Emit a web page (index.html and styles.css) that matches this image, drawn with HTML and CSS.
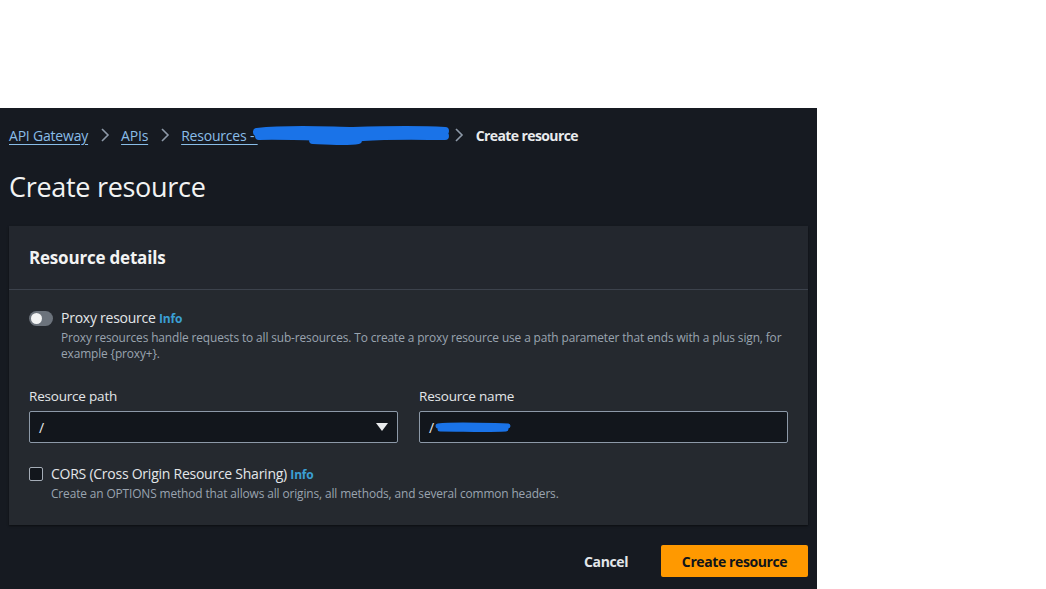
FILE: index.html
```html
<!DOCTYPE html>
<html lang="en">
<head>
<meta charset="utf-8">
<title>Create resource</title>
<link rel="stylesheet" href="styles.css">
</head>
<body>
<div class="top-space"></div>
<div class="app">
  <nav class="crumbs">
    <a class="crumb" href="#">API Gateway</a>
    <svg class="sep" width="16" height="16" viewBox="0 0 16 16"><path d="M5 2l6 6-6 6" fill="none" stroke="#8d99a8" stroke-width="1.6"/></svg>
    <a class="crumb" href="#">APIs</a>
    <svg class="sep" width="16" height="16" viewBox="0 0 16 16"><path d="M5 2l6 6-6 6" fill="none" stroke="#8d99a8" stroke-width="1.6"/></svg>
    <span class="crumb-wrap"><a class="crumb" href="#">Resources - <span class="redact-space"></span></a>
      <svg class="scribble" width="200" height="22" viewBox="0 0 200 22"><path d="M4 9 C40 5 80 8 100 8 C130 7 160 6 192 8 M6 13 C50 12 90 16 110 14 C140 12 170 13 192 13 M60 17 C80 18 95 19 105 17" fill="none" stroke="#1a73e8" stroke-width="8" stroke-linecap="round"/></svg>
    </span>
    <svg class="sep" width="16" height="16" viewBox="0 0 16 16"><path d="M5 2l6 6-6 6" fill="none" stroke="#8d99a8" stroke-width="1.6"/></svg>
    <span class="crumb-current">Create resource</span>
  </nav>
  <h1 class="title">Create resource</h1>
  <section class="card">
    <header class="card-head"><h2>Resource details</h2></header>
    <div class="card-body">
      <div class="opt">
        <span class="toggle"><span class="knob"></span></span>
        <div class="opt-text">
          <div class="opt-label">Proxy resource <a class="info" href="#">Info</a></div>
          <div class="desc">Proxy resources handle requests to all sub-resources. To create a proxy resource use a path parameter that ends with a plus sign, for example {proxy+}.</div>
        </div>
      </div>
      <div class="fields">
        <div class="field">
          <label class="flabel">Resource path</label>
          <div class="input select"><span>/</span>
            <svg width="12" height="10" viewBox="0 0 12 10"><path d="M0 1h12L6 9z" fill="#e9ebed"/></svg>
          </div>
        </div>
        <div class="field">
          <label class="flabel">Resource name</label>
          <div class="input"><span>/</span>
            <svg class="scribble2" width="80" height="12" viewBox="0 0 80 12"><path d="M4 5 C20 3 40 4 74 5 M6 8 C30 8 50 9 72 8" fill="none" stroke="#1a73e8" stroke-width="5" stroke-linecap="round"/></svg>
          </div>
        </div>
      </div>
      <div class="opt cors">
        <span class="checkbox"></span>
        <div class="opt-text">
          <div class="opt-label">CORS (Cross Origin Resource Sharing) <a class="info" href="#">Info</a></div>
          <div class="desc">Create an OPTIONS method that allows all origins, all methods, and several common headers.</div>
        </div>
      </div>
    </div>
  </section>
  <div class="actions">
    <button class="btn-link">Cancel</button>
    <button class="btn-primary">Create resource</button>
  </div>
</div>
</body>
</html>
```
FILE: styles.css
```css
* { box-sizing: border-box; }
body {
  margin: 0;
  background: #ffffff;
  font-family: "Open Sans", "Noto Sans", sans-serif;
  color: #e9ebed;
}
.top-space { height: 108px; }
.app {
  width: 817px;
  height: 481px;
  background: #161a21;
  padding: 0 9px;
  overflow: hidden;
}
.crumbs {
  display: flex;
  align-items: center;
  height: 54px;
  font-size: 14px;
  letter-spacing: -0.2px;
}
.crumb {
  color: #89bde8;
  text-decoration: underline;
  text-underline-offset: 3px;
  text-decoration-color: #89bde8;
}
.sep { margin: 0 8.5px; }
.crumb-wrap { position: relative; display: inline-flex; align-items: center; }
.redact-space { display: inline-block; width: 185px; }
.scribble { position: absolute; left: 72px; top: -3px; }
.crumb-current { color: #e9ebed; font-weight: 700; letter-spacing: -0.6px; }
.title {
  margin: 0;
  font-size: 27px;
  font-weight: 400;
  letter-spacing: -0.3px;
  line-height: 34px;
  height: 64px;
  padding-top: 8px;
  color: #f2f3f3;
}
.card {
  background: #23272e;
  box-shadow: 0 1px 2px rgba(0,0,0,0.5);
}
.card-head {
  height: 64px;
  border-bottom: 1px solid #3c424c;
  padding: 0 20px;
  display: flex;
  align-items: center;
}
.card-head h2 {
  margin: 0;
  font-size: 17px;
  font-weight: 700;
  letter-spacing: -0.2px;
  color: #f2f3f3;
}
.card-body {
  background: #25292f;
  padding: 18px 20px 24px;
}
.opt { display: flex; gap: 8px; }
.opt-label {
  font-size: 14px;
  line-height: 19px;
  color: #e3e6e9;
  letter-spacing: -0.25px;
}
.info {
  color: #3b9fd4;
  font-weight: 700;
  font-size: 12px;
  letter-spacing: -0.2px;
  text-decoration: none;
}
.desc {
  font-size: 11.9px;
  line-height: 16px;
  margin-top: 1px;
  color: #9aa4b0;
  letter-spacing: -0.12px;
}
.toggle {
  flex: none;
  width: 24px;
  height: 15px;
  border-radius: 8px;
  background: #6c737c;
  margin-top: 3px;
  position: relative;
}
.knob {
  position: absolute;
  left: 2px;
  top: 2px;
  width: 11px;
  height: 11px;
  border-radius: 50%;
  background: #f2f3f3;
}
.fields {
  display: flex;
  gap: 21px;
  margin-top: 25px;
}
.field { flex: 1; }
.flabel {
  display: block;
  font-size: 13.5px;
  line-height: 20px;
  color: #e3e6e9;
  margin-bottom: 5px;
  letter-spacing: -0.2px;
}
.input {
  height: 32px;
  background: #12161c;
  border: 1px solid #8d99a8;
  border-radius: 2px;
  display: flex;
  align-items: center;
  padding: 0 9px;
  font-size: 14px;
  color: #e9ebed;
  position: relative;
}
.select { justify-content: space-between; }
.scribble2 { position: absolute; left: 14px; top: 9px; }
.cors { margin-top: 21px; }
.checkbox {
  flex: none;
  width: 14px;
  height: 14px;
  border: 1px solid #a5adb7;
  border-radius: 2px;
  background: #12161c;
  margin-top: 3px;
}
.actions {
  display: flex;
  justify-content: flex-end;
  align-items: center;
  gap: 33px;
  margin-top: 20px;
}
.btn-link {
  background: none;
  border: none;
  color: #e3e6e9;
  font-family: inherit;
  font-weight: 700;
  font-size: 14px;
  letter-spacing: -0.4px;
  padding: 0;
}
.btn-primary {
  background: #ff9900;
  border: none;
  border-radius: 2px;
  color: #0f141a;
  font-family: inherit;
  font-weight: 700;
  font-size: 14px;
  letter-spacing: -0.4px;
  height: 32px;
  width: 147px;
}
```
